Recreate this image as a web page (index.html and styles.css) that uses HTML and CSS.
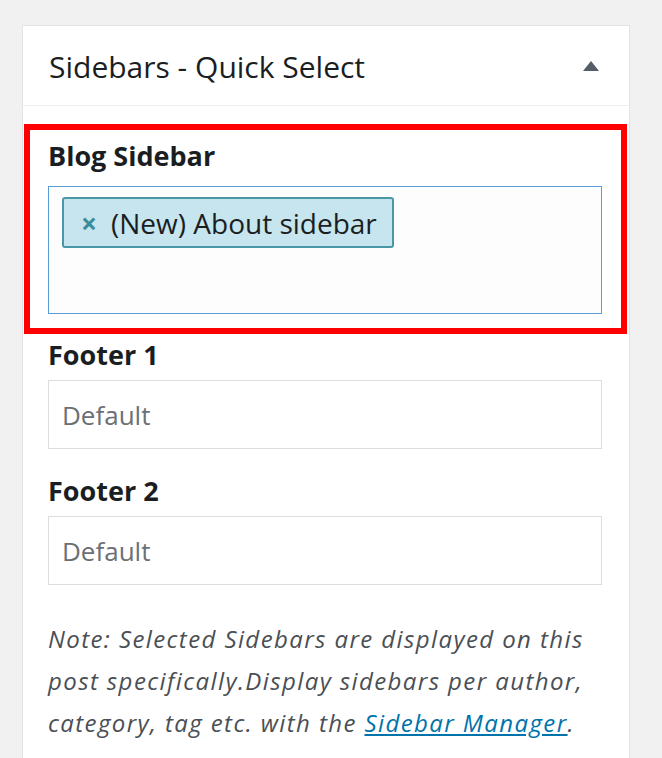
FILE: index.html
```html
<!DOCTYPE html>
<html lang="en">
<head>
<meta charset="utf-8">
<title>Sidebars - Quick Select</title>
<link rel="stylesheet" href="styles.css">
</head>
<body>
  <div class="postbox">
    <div class="postbox-header">
      <h2 class="postbox-title">Sidebars - Quick Select</h2>
      <span class="toggle-arrow" aria-hidden="true"></span>
    </div>
    <div class="postbox-body">
      <div class="field field-highlight">
        <label class="field-label">Blog Sidebar</label>
        <div class="select-multi">
          <span class="token"><span class="token-remove">×</span>(New) About sidebar</span>
        </div>
      </div>
      <div class="field">
        <label class="field-label">Footer 1</label>
        <div class="select-single">Default</div>
      </div>
      <div class="field">
        <label class="field-label">Footer 2</label>
        <div class="select-single">Default</div>
      </div>
      <p class="note">Note: Selected Sidebars are displayed on this<br>post specifically.Display sidebars per author,<br>category, tag etc. with the <a href="#" class="note-link">Sidebar Manager</a>.</p>
    </div>
  </div>
</body>
</html>
```
FILE: styles.css
```css
html, body {
  margin: 0;
  padding: 0;
  background: #f1f1f1;
  height: 100%;
  overflow: hidden;
}

body {
  font-family: "Open Sans", "Noto Sans", "DejaVu Sans", sans-serif;
  color: #23282d;
}

.postbox {
  margin: 25px 0 0 22px;
  width: 606px;
  min-height: 900px;
  background: #fff;
  border: 1px solid #e3e3e3;
}

.postbox-header {
  height: 79px;
  display: flex;
  align-items: center;
  justify-content: space-between;
  padding: 0 30px 0 26px;
  border-bottom: 1px solid #eeeeee;
}

.postbox-title {
  margin: 0;
  font-size: 30px;
  font-weight: 400;
  line-height: 1;
  padding-top: 3px;
  color: #1a1e22;
}

.toggle-arrow {
  width: 0;
  height: 0;
  border-left: 8px solid transparent;
  border-right: 8px solid transparent;
  border-bottom: 10px solid #555d66;
}

.postbox-body {
  padding: 18px 27px 0 25px;
}

.field {
  display: flex;
  flex-direction: column;
}

.field + .field {
  margin-top: 26px;
}

.field-highlight + .field {
  margin-top: 5px;
}

.field-highlight {
  margin: 0 -25px 0 -24px;
  padding: 10px 19px 14px 18px;
  border: 6px solid #ff0000;
}

.field-label {
  font-size: 27px;
  font-weight: 700;
  line-height: 32px;
  color: #1a1e22;
  margin-bottom: 9px;
}

.field-highlight .field-label {
  margin-bottom: 14px;
}

.select-multi {
  border: 1px solid #5b9dd9;
  background: #fdfdfd;
  padding: 10px 13px 0;
  height: 116px;
  display: flex;
  align-items: flex-start;
}

.token {
  display: inline-flex;
  align-items: center;
  height: 47px;
  padding: 0 15px 0 17px;
  background: #c7e5ee;
  border: 2px solid #4a97a5;
  border-radius: 3px;
  font-size: 28px;
  color: #1a1e22;
}

.token-remove {
  color: #3b8c9a;
  font-size: 28px;
  font-weight: 700;
  margin-right: 14px;
}

.select-single {
  height: 67px;
  display: flex;
  align-items: center;
  padding-left: 13px;
  border: 1px solid #dddddd;
  font-size: 26px;
  color: #6b7075;
}

.note {
  margin: 33px 0 0;
  font-size: 24px;
  line-height: 42px;
  font-style: italic;
  letter-spacing: 1.4px;
  color: #4a4f55;
  white-space: nowrap;
}

.note-link {
  color: #0073aa;
  text-decoration: underline;
}
```
